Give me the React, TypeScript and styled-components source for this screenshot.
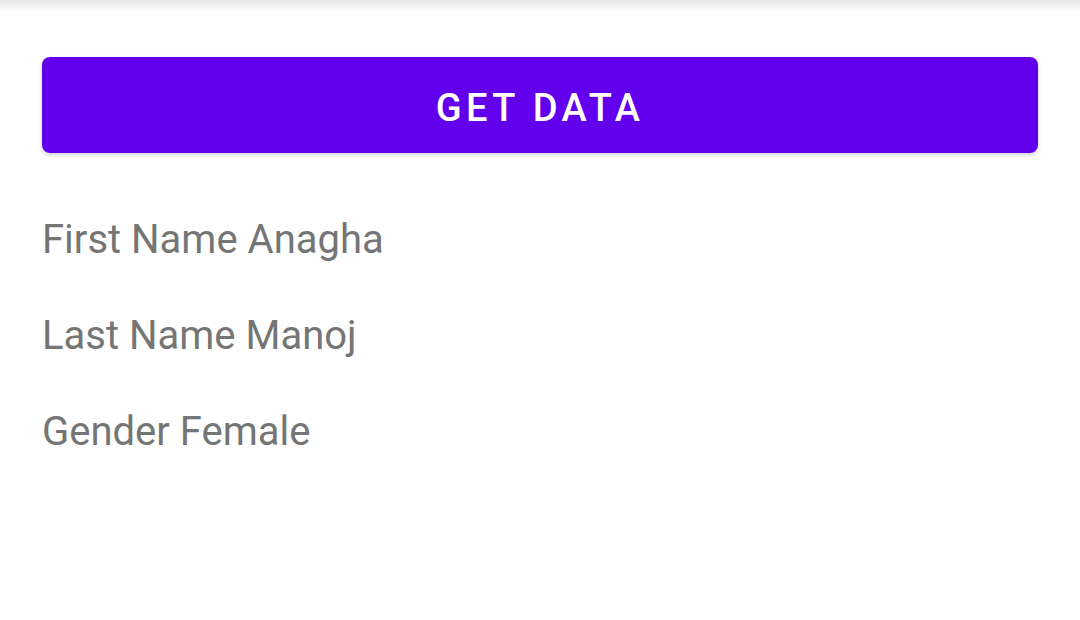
import styled, { createGlobalStyle } from 'styled-components';

const GlobalStyle = createGlobalStyle`
    html, body {
        margin: 0;
        padding: 0;
        background: #ffffff;
        font-family: Roboto, "Noto Sans", Arial, sans-serif;
    }
`;

const Screen = styled.div`
    width: 1080px;
    height: 620px;
    display: flex;
    flex-direction: column;
    background: #ffffff;
    overflow: hidden;
`;

const TopShadow = styled.div`
    height: 12px;
    background: linear-gradient(to bottom, rgba(0, 0, 0, 0.1), rgba(0, 0, 0, 0));
`;

const Content = styled.div`
    display: flex;
    flex-direction: column;
    padding: 45px 42px 0;
`;

const GetDataButton = styled.button`
    height: 96px;
    width: 100%;
    padding: 5px 0 0;
    border: none;
    border-radius: 8px;
    background-color: #6200ee;
    color: #ffffff;
    font-family: Roboto, Arial, sans-serif;
    font-weight: 500;
    font-size: 38px;
    letter-spacing: 4.4px;
    text-transform: uppercase;
    box-shadow: 0 2px 4px rgba(0, 0, 0, 0.18);
    cursor: pointer;
`;

const Fields = styled.div`
    display: flex;
    flex-direction: column;
    gap: 48px;
    margin-top: 63px;
`;

const FieldText = styled.div`
    font-size: 40px;
    line-height: 48px;
    color: #757575;
`;

interface Person {
    firstName: string;
    lastName: string;
    gender: string;
}

const person: Person = {
    firstName: 'Anagha',
    lastName: 'Manoj',
    gender: 'Female',
};

const App = () => {
    return (
        <>
            <GlobalStyle />
            <Screen>
                <TopShadow />
                <Content>
                    <GetDataButton>Get Data</GetDataButton>
                    <Fields>
                        <FieldText>First Name {person.firstName}</FieldText>
                        <FieldText>Last Name {person.lastName}</FieldText>
                        <FieldText>Gender {person.gender}</FieldText>
                    </Fields>
                </Content>
            </Screen>
        </>
    );
};

export default App;
